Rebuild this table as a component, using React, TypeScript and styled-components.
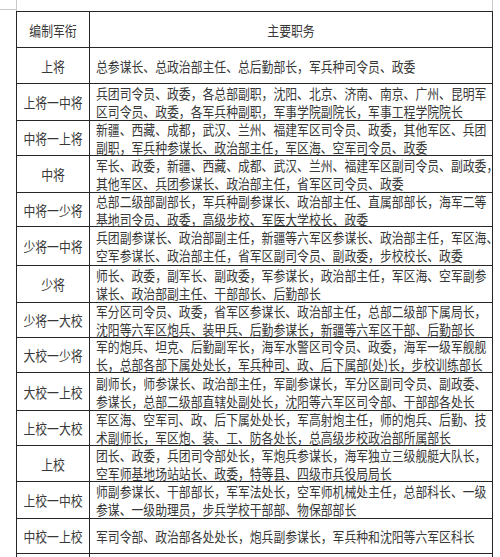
import React from 'react';
import styled, { createGlobalStyle } from 'styled-components';

const GlobalStyle = createGlobalStyle`
  body {
    margin: 0;
    background: #ffffff;
    font-family: "Noto Sans CJK SC", "Noto Sans", sans-serif;
    color: #383838;
  }
`;

const Page = styled.div`
  width: 500px;
  height: 557px;
  overflow: hidden;
`;

const TopStrip = styled.div`
  display: flex;
  height: 11px;
`;

const CornerTick = styled.div`
  width: 16px;
  height: 9px;
  border-bottom: 1px solid #c8c8c8;
`;

const MarginGuide = styled.div`
  width: 475px;
  border-left: 1px solid #c8c8c8;
  border-right: 1px solid #c8c8c8;
`;

const Sheet = styled.div`
  box-sizing: border-box;
  margin-left: 16px;
  width: 477px;
  border-left: 1px solid #262626;
  border-right: 1px solid #262626;
  border-bottom: 1px solid #262626;
  font-size: 14px;
  line-height: 18px;
`;

const Row = styled.div<{ $h: number }>`
  box-sizing: border-box;
  display: flex;
  height: ${(p) => p.$h}px;
  border-top: 1px solid #262626;
`;

const RankCell = styled.div`
  box-sizing: border-box;
  width: 73px;
  flex: none;
  display: flex;
  flex-direction: column;
  justify-content: center;
  border-right: 1px solid #262626;
`;

const DutyCell = styled.div<{ $center?: boolean }>`
  flex: 1;
  min-width: 0;
  display: flex;
  flex-direction: column;
  justify-content: center;
  padding-left: ${(p) => (p.$center ? 0 : 6)}px;
`;

const Line = styled.span<{ $center?: boolean }>`
  display: block;
  white-space: nowrap;
  text-align: ${(p) => (p.$center ? 'center' : 'left')};
  transform: scaleX(0.845);
  transform-origin: ${(p) => (p.$center ? 'center' : 'left')} center;
`;

type Rank = [string, string[], number];

const ranks: Rank[] = [
  ['上将', ['总参谋长、总政治部主任、总后勤部长，军兵种司令员、政委'], 36],
  ['上将一中将', ['兵团司令员、政委，各总部副职，沈阳、北京、济南、南京、广州、昆明军', '区司令员、政委，各军兵种副职，军事学院副院长，军事工程学院院长'], 37],
  ['中将一上将', ['新疆、西藏、成都，武汉、兰州、福建军区司令员、政委，其他军区、兵团', '副职，军兵种参谋长、政治部主任，军区海、空军司令员、政委'], 35],
  ['中将', ['军长、政委，新疆、西藏、成都、武汉、兰州、福建军区副司令员、副政委，', '其他军区、兵团参谋长、政治部主任，省军区司令员、政委'], 37],
  ['中将一少将', ['总部二级部副部长，军兵种副参谋长、政治部主任、直属部部长，海军二等', '基地司令员、政委，高级步校、军医大学校长、政委'], 34],
  ['少将一中将', ['兵团副参谋长、政治部副主任，新疆等六军区参谋长、政治部主任，军区海、', '空军参谋长、政治部主任，省军区副司令员、副政委，步校校长、政委'], 39],
  ['少将', ['师长、政委，副军长、副政委，军参谋长，政治部主任，军区海、空军副参', '谋长、政治部副主任、干部部长、后勤部长'], 37],
  ['少将一大校', ['军分区司令员、政委，省军区参谋长、政治部主任，总部二级部下属局长，', '沈阳等六军区炮兵、装甲兵、后勤参谋长，新疆等六军区干部、后勤部长'], 35],
  ['大校一少将', ['军的炮兵、坦克、后勤副军长，海军水警区司令员、政委，海军一级军舰舰', '长，总部各部下属处处长，军兵种司、政、后下属部(处)长，步校训练部长'], 35],
  ['大校一上校', ['副师长，师参谋长、政治部主任，军副参谋长，军分区副司令员、副政委、', '参谋长，总部二级部直辖处副处长，沈阳等六军区司令部、干部部各处长'], 38],
  ['上校一大校', ['军区海、空军司、政、后下属处处长，军高射炮主任，师的炮兵、后勤、技', '术副师长，军区炮、装、工、防各处长，总高级步校政治部所属部长'], 35],
  ['上校', ['团长、政委，兵团司令部处长，军炮兵参谋长，海军独立三级舰艇大队长，', '空军师基地场站站长、政委，特等县、四级市兵役局局长'], 36],
  ['上校一中校', ['师副参谋长、干部部长，军军法处长，空军师机械处主任，总部科长、一级', '参谋、一级助理员，步兵学校干部部、物保部部长'], 37],
  ['中校一上校', ['军司令部、政治部各处处长，炮兵副参谋长，军兵种和沈阳等六军区科长'], 35],
];

export default function App() {
  return (
    <Page>
      <GlobalStyle />
      <TopStrip>
        <CornerTick />
        <MarginGuide />
      </TopStrip>
      <Sheet>
        <Row $h={36}>
          <RankCell>
            <Line $center>编制军衔</Line>
          </RankCell>
          <DutyCell $center>
            <Line $center>主要职务</Line>
          </DutyCell>
        </Row>
        {ranks.map(([rank, duties, h]) => (
          <Row key={rank} $h={h}>
            <RankCell>
              <Line $center>{rank}</Line>
            </RankCell>
            <DutyCell>
              {duties.map((d, i) => (
                <Line key={i}>{d}</Line>
              ))}
            </DutyCell>
          </Row>
        ))}
        <Row $h={36}>
          <RankCell />
          <DutyCell />
        </Row>
      </Sheet>
    </Page>
  );
}
